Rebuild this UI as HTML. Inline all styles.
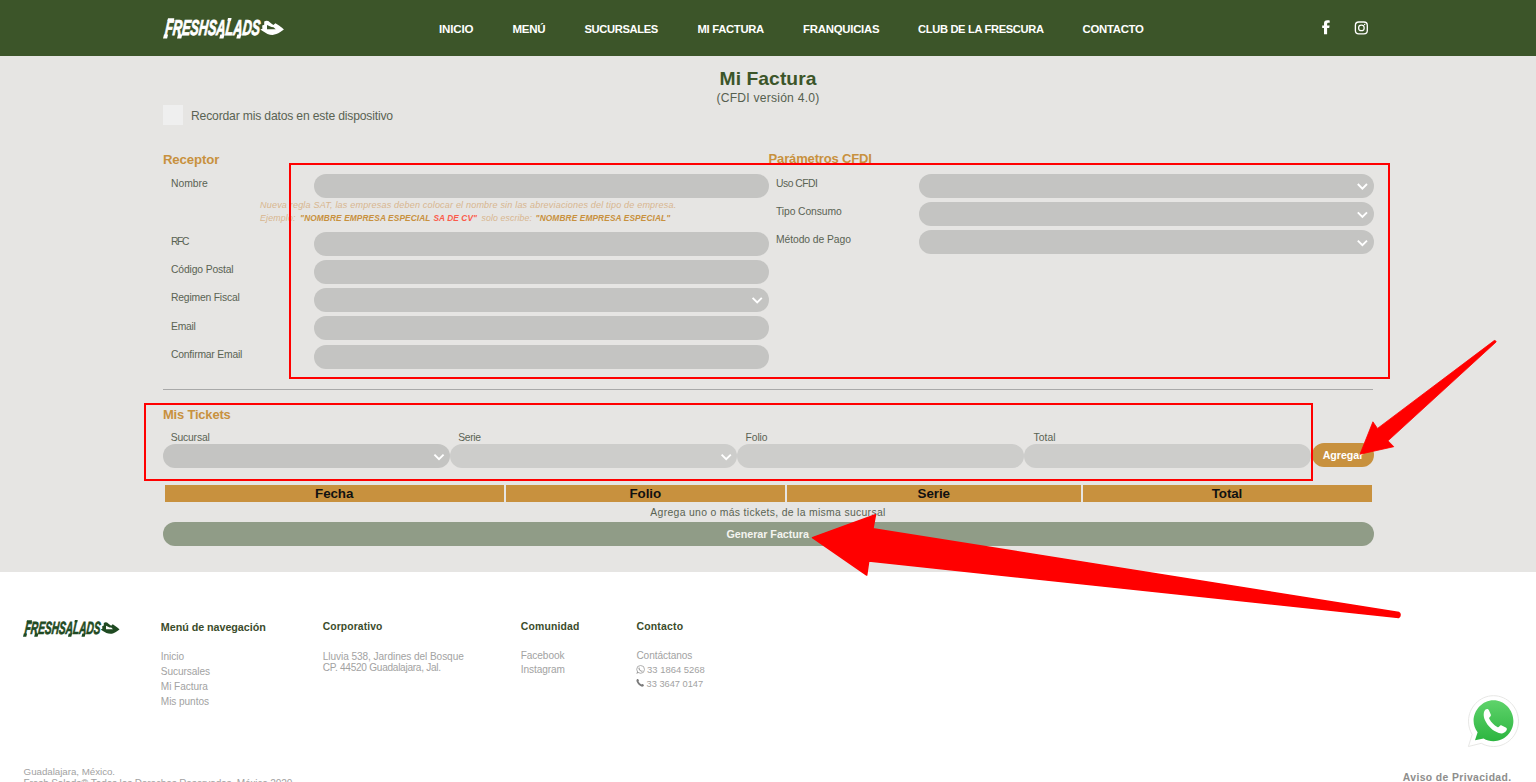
<!DOCTYPE html>
<html><head><meta charset="utf-8"><style>
html,body{margin:0;padding:0;width:1536px;height:782px;overflow:hidden;background:#fff}
body{position:relative;font-family:"Liberation Sans",sans-serif}
.t{position:absolute;white-space:nowrap}
</style></head><body>
<div style="position:absolute;left:0px;top:0px;width:1536px;height:56px;background:#3c5529"></div>
<svg style="position:absolute;left:163px;top:18.2px" width="121" height="21" viewBox="0 0 121 21" preserveAspectRatio="none">
<g fill="#ffffff">
<text x="1.5" y="16.8" font-family="Liberation Sans" font-weight="bold" font-style="italic" font-size="21.5" transform="translate(0,16.8) skewX(-6) translate(0,-16.8)" textLength="95" lengthAdjust="spacingAndGlyphs" stroke="#ffffff" stroke-width="0.85">FRESHSALADS</text>
<path d="M0,20.6 L4.1,20.6 L5.1,16.6 L1,16.6 Z M5,0.3 L11.3,0.3 L10.8,2.8 L4.4,2.8 Z M14,20.6 L18.3,20.6 L19.3,16.6 L15,16.6 Z M56.3,20.6 L60.5,20.6 L61.5,16.6 L57.3,16.6 Z M65,0.1 L68.6,0.1 L68,2.8 L64.4,2.8 Z M73.3,20.6 L77.3,20.6 L78.3,16.6 L74.3,16.6 Z"/>
<path d="M97.3,11.6 L99.4,10.8 L99.2,7.5 L101.2,6.7 L101.2,3.6 L103.2,2.7 L105.3,3.1 L108.3,5.4 L110.4,7.0 L112.4,5.3 L116,7.5 L119,9.8 L120.9,11.6 L117.3,14.1 C114.5,15.8 112,16.9 109.6,16.9 C107.8,16.9 106,16.5 104.5,15.9 L99.6,13.1 Z M104,7.0 L104,11.3 L112.7,11.3 L110.5,9.3 L108.5,9.1 Z" fill-rule="evenodd"/>
</g>
</svg>
<div class="t" style="left:438.90px;top:23.72px;font-size:11.55px;line-height:11.55px;letter-spacing:-0.136px;font-weight:bold;font-style:normal;color:#ffffff;">INICIO</div>
<div class="t" style="left:512.50px;top:23.77px;font-size:11.50px;line-height:11.50px;letter-spacing:-0.253px;font-weight:bold;font-style:normal;color:#ffffff;">MENÚ</div>
<div class="t" style="left:584.40px;top:24.03px;font-size:11.19px;line-height:11.19px;letter-spacing:-0.355px;font-weight:bold;font-style:normal;color:#ffffff;">SUCURSALES</div>
<div class="t" style="left:697.50px;top:23.98px;font-size:11.25px;line-height:11.25px;letter-spacing:-0.292px;font-weight:bold;font-style:normal;color:#ffffff;">MI FACTURA</div>
<div class="t" style="left:803.10px;top:23.88px;font-size:11.36px;line-height:11.36px;letter-spacing:-0.241px;font-weight:bold;font-style:normal;color:#ffffff;">FRANQUICIAS</div>
<div class="t" style="left:918.10px;top:24.08px;font-size:11.13px;line-height:11.13px;letter-spacing:-0.332px;font-weight:bold;font-style:normal;color:#ffffff;">CLUB DE LA FRESCURA</div>
<div class="t" style="left:1082.50px;top:23.87px;font-size:11.37px;line-height:11.37px;letter-spacing:-0.272px;font-weight:bold;font-style:normal;color:#ffffff;">CONTACTO</div>
<svg style="position:absolute;left:0;top:0" width="1536" height="56">
<path fill="#fff" d="M1324,34.3 V28 H1322.2 V25.4 H1324 V23.4 C1324,21.2 1325.2,20.2 1327.3,20.2 C1328.3,20.2 1329.7,20.4 1329.7,20.4 V22.8 H1328.6 C1327.6,22.8 1327.1,23.3 1327.1,24.1 V25.4 H1329.6 L1329.2,28 H1327.1 V34.3 Z"/>
<rect x="1355.4" y="22" width="11.9" height="11.8" rx="3.4" fill="none" stroke="#fff" stroke-width="1.35"/>
<circle cx="1361.4" cy="27.9" r="2.8" fill="none" stroke="#fff" stroke-width="1.25"/>
<circle cx="1364.6" cy="24.6" r="0.75" fill="#fff"/>
</svg>
<div style="position:absolute;left:0px;top:56px;width:1536px;height:516px;background:#e6e5e3"></div>
<div class="t" style="left:719.60px;top:69.07px;font-size:19.28px;line-height:19.28px;letter-spacing:0.056px;font-weight:bold;font-style:normal;color:#3c5529;">Mi Factura</div>
<div class="t" style="left:716.40px;top:91.62px;font-size:12.14px;line-height:12.14px;letter-spacing:0.223px;font-weight:normal;font-style:normal;color:#56604f;">(CFDI versión 4.0)</div>
<div style="position:absolute;left:163px;top:105px;width:20px;height:20px;background:#efefef"></div>
<div class="t" style="left:191.00px;top:109.89px;font-size:12.17px;line-height:12.17px;letter-spacing:-0.180px;font-weight:normal;font-style:normal;color:#5a6353;">Recordar mis datos en este dispositivo</div>
<div class="t" style="left:162.90px;top:152.80px;font-size:13.23px;line-height:13.23px;letter-spacing:-0.104px;font-weight:bold;font-style:normal;color:#c8913e;">Receptor</div>
<div class="t" style="left:768.60px;top:152.16px;font-size:13.04px;line-height:13.04px;letter-spacing:-0.168px;font-weight:bold;font-style:normal;color:#c8913e;">Parámetros CFDI</div>
<div style="position:absolute;left:314px;top:173.5px;width:455px;height:24px;background:#c4c4c2;border-radius:12.0px"></div>
<div class="t" style="left:171.00px;top:178.84px;font-size:10.35px;line-height:10.35px;letter-spacing:0.001px;font-weight:normal;font-style:normal;color:#5a6353;">Nombre</div>
<div style="position:absolute;left:314px;top:231.5px;width:455px;height:24px;background:#c4c4c2;border-radius:12.0px"></div>
<div class="t" style="left:171.00px;top:236.84px;font-size:10.35px;line-height:10.35px;letter-spacing:-1.385px;font-weight:normal;font-style:normal;color:#5a6353;">RFC</div>
<div style="position:absolute;left:314px;top:259.8px;width:455px;height:24px;background:#c4c4c2;border-radius:12.0px"></div>
<div class="t" style="left:171.00px;top:265.14px;font-size:10.35px;line-height:10.35px;letter-spacing:-0.144px;font-weight:normal;font-style:normal;color:#5a6353;">Código Postal</div>
<div style="position:absolute;left:314px;top:288px;width:455px;height:24px;background:#c4c4c2;border-radius:12.0px"></div>
<div class="t" style="left:171.00px;top:293.34px;font-size:10.35px;line-height:10.35px;letter-spacing:-0.193px;font-weight:normal;font-style:normal;color:#5a6353;">Regimen Fiscal</div>
<div style="position:absolute;left:314px;top:316.3px;width:455px;height:24px;background:#c4c4c2;border-radius:12.0px"></div>
<div class="t" style="left:171.00px;top:321.64px;font-size:10.35px;line-height:10.35px;letter-spacing:-0.244px;font-weight:normal;font-style:normal;color:#5a6353;">Email</div>
<div style="position:absolute;left:314px;top:344.6px;width:455px;height:24px;background:#c4c4c2;border-radius:12.0px"></div>
<div class="t" style="left:171.00px;top:349.94px;font-size:10.35px;line-height:10.35px;letter-spacing:-0.201px;font-weight:normal;font-style:normal;color:#5a6353;">Confirmar Email</div>
<div style="position:absolute;left:919px;top:173.5px;width:455px;height:24px;background:#c4c4c2;border-radius:12.0px"></div>
<div class="t" style="left:776.00px;top:178.84px;font-size:10.35px;line-height:10.35px;letter-spacing:-0.491px;font-weight:normal;font-style:normal;color:#5a6353;">Uso CFDI</div>
<div style="position:absolute;left:919px;top:201.8px;width:455px;height:24px;background:#c4c4c2;border-radius:12.0px"></div>
<div class="t" style="left:776.00px;top:207.14px;font-size:10.35px;line-height:10.35px;letter-spacing:-0.110px;font-weight:normal;font-style:normal;color:#5a6353;">Tipo Consumo</div>
<div style="position:absolute;left:919px;top:230px;width:455px;height:24px;background:#c4c4c2;border-radius:12.0px"></div>
<div class="t" style="left:776.00px;top:235.34px;font-size:10.35px;line-height:10.35px;letter-spacing:-0.075px;font-weight:normal;font-style:normal;color:#5a6353;">Método de Pago</div>
<div class="t" style="left:260.00px;top:200.61px;font-size:9.08px;line-height:9.08px;letter-spacing:0.163px;font-weight:normal;font-style:italic;color:#d8b68f;">Nueva regla SAT, las empresas deben colocar el nombre sin las abreviaciones del tipo de empresa.</div>
<div class="t" style="left:260.00px;top:213.92px;font-size:8.84px;line-height:8.84px;letter-spacing:0.161px;font-weight:normal;font-style:italic;color:#d8b68f;">Ejemplo:</div>
<div class="t" style="left:300.10px;top:214.36px;font-size:8.32px;line-height:8.32px;letter-spacing:0.106px;font-weight:bold;font-style:italic;color:#c8913e;">&quot;NOMBRE EMPRESA ESPECIAL</div>
<div class="t" style="left:433.40px;top:214.36px;font-size:8.31px;line-height:8.31px;letter-spacing:0.102px;font-weight:bold;font-style:italic;color:#fb5b4b;">SA DE CV&quot;</div>
<div class="t" style="left:481.50px;top:214.02px;font-size:8.72px;line-height:8.72px;letter-spacing:0.121px;font-weight:normal;font-style:italic;color:#d8b68f;">solo escribe:</div>
<div class="t" style="left:535.60px;top:214.35px;font-size:8.33px;line-height:8.33px;letter-spacing:0.107px;font-weight:bold;font-style:italic;color:#c8913e;">&quot;NOMBRE EMPRESA ESPECIAL&quot;</div>
<div style="position:absolute;left:163px;top:389px;width:1210px;height:1px;background:#a9a9a9"></div>
<div class="t" style="left:162.90px;top:408.41px;font-size:12.98px;line-height:12.98px;letter-spacing:-0.178px;font-weight:bold;font-style:normal;color:#c8913e;">Mis Tickets</div>
<div class="t" style="left:170.70px;top:433.04px;font-size:10.35px;line-height:10.35px;letter-spacing:-0.166px;font-weight:normal;font-style:normal;color:#5a6353;">Sucursal</div>
<div class="t" style="left:458.20px;top:433.04px;font-size:10.35px;line-height:10.35px;letter-spacing:-0.342px;font-weight:normal;font-style:normal;color:#5a6353;">Serie</div>
<div class="t" style="left:745.60px;top:433.04px;font-size:10.35px;line-height:10.35px;letter-spacing:-0.140px;font-weight:normal;font-style:normal;color:#5a6353;">Folio</div>
<div class="t" style="left:1033.60px;top:433.04px;font-size:10.35px;line-height:10.35px;letter-spacing:0.015px;font-weight:normal;font-style:normal;color:#5a6353;">Total</div>
<div style="position:absolute;left:163px;top:444px;width:287px;height:24px;background:#c4c4c2;border-radius:12.0px"></div>
<div style="position:absolute;left:450px;top:444px;width:287px;height:24px;background:#cdcdcb;border-radius:12.0px"></div>
<div style="position:absolute;left:737px;top:444px;width:287px;height:24px;background:#cdcdcb;border-radius:12.0px"></div>
<div style="position:absolute;left:1024px;top:444px;width:287px;height:24px;background:#cdcdcb;border-radius:12.0px"></div>
<div style="position:absolute;left:1312px;top:443px;width:61.5px;height:24px;background:#c8913e;border-radius:12.0px"></div>
<div class="t" style="left:1322.70px;top:450.12px;font-size:10.60px;line-height:10.60px;letter-spacing:0.000px;font-weight:bold;font-style:normal;color:#ffffff;">Agregar</div>
<div style="position:absolute;left:165px;top:485px;width:339px;height:17px;background:#c8913e"></div>
<div class="t" style="left:315.07px;top:486.85px;font-size:13.40px;line-height:13.40px;letter-spacing:-0.100px;font-weight:bold;font-style:normal;color:#111;">Fecha</div>
<div style="position:absolute;left:506px;top:485px;width:279px;height:17px;background:#c8913e"></div>
<div class="t" style="left:629.49px;top:486.85px;font-size:13.40px;line-height:13.40px;letter-spacing:-0.100px;font-weight:bold;font-style:normal;color:#111;">Folio</div>
<div style="position:absolute;left:787px;top:485px;width:294px;height:17px;background:#c8913e"></div>
<div class="t" style="left:917.62px;top:486.85px;font-size:13.40px;line-height:13.40px;letter-spacing:-0.100px;font-weight:bold;font-style:normal;color:#111;">Serie</div>
<div style="position:absolute;left:1082.5px;top:485px;width:289.5px;height:17px;background:#c8913e"></div>
<div class="t" style="left:1211.74px;top:486.85px;font-size:13.40px;line-height:13.40px;letter-spacing:-0.100px;font-weight:bold;font-style:normal;color:#111;">Total</div>
<div class="t" style="left:650.30px;top:508.18px;font-size:10.42px;line-height:10.42px;letter-spacing:0.313px;font-weight:normal;font-style:normal;color:#5a6353;">Agrega uno o más tickets, de la misma sucursal</div>
<div style="position:absolute;left:163px;top:522px;width:1211px;height:24px;background:#909c87;border-radius:12.0px"></div>
<div class="t" style="left:726.50px;top:529.00px;font-size:10.75px;line-height:10.75px;letter-spacing:-0.045px;font-weight:bold;font-style:normal;color:#f4f4f0;">Generar Factura</div>
<svg style="position:absolute;left:0;top:0" width="1536" height="782"><polyline points="1357.8000000000002,184.0 1362.4,188.6 1367.0,184.0" fill="none" stroke="#fff" stroke-width="1.9"/><polyline points="1357.8000000000002,212.29999999999998 1362.4,216.89999999999998 1367.0,212.29999999999998" fill="none" stroke="#fff" stroke-width="1.9"/><polyline points="1357.8000000000002,240.6 1362.4,245.2 1367.0,240.6" fill="none" stroke="#fff" stroke-width="1.9"/><polyline points="752.6,297.8 757.2,302.4 761.8000000000001,297.8" fill="none" stroke="#fff" stroke-width="1.9"/><polyline points="434.4,454.6 439,459.2 443.6,454.6" fill="none" stroke="#fff" stroke-width="1.9"/><polyline points="721.6,454.6 726.2,459.2 730.8000000000001,454.6" fill="none" stroke="#fff" stroke-width="1.9"/></svg>
<div style="position:absolute;left:289px;top:163px;width:1097px;height:212px;border:2px solid #ff0000"></div>
<div style="position:absolute;left:144px;top:403px;width:1165px;height:74px;border:2px solid #ff0000"></div>
<div style="position:absolute;left:0px;top:572px;width:1536px;height:210px;background:#ffffff"></div>
<svg style="position:absolute;left:23.3px;top:620px" width="96.6" height="17.2" viewBox="0 0 121 21" preserveAspectRatio="none">
<g fill="#1f4a22">
<text x="1.5" y="16.8" font-family="Liberation Sans" font-weight="bold" font-style="italic" font-size="21.5" transform="translate(0,16.8) skewX(-6) translate(0,-16.8)" textLength="95" lengthAdjust="spacingAndGlyphs" stroke="#1f4a22" stroke-width="0.85">FRESHSALADS</text>
<path d="M0,20.6 L4.1,20.6 L5.1,16.6 L1,16.6 Z M5,0.3 L11.3,0.3 L10.8,2.8 L4.4,2.8 Z M14,20.6 L18.3,20.6 L19.3,16.6 L15,16.6 Z M56.3,20.6 L60.5,20.6 L61.5,16.6 L57.3,16.6 Z M65,0.1 L68.6,0.1 L68,2.8 L64.4,2.8 Z M73.3,20.6 L77.3,20.6 L78.3,16.6 L74.3,16.6 Z"/>
<path d="M97.3,11.6 L99.4,10.8 L99.2,7.5 L101.2,6.7 L101.2,3.6 L103.2,2.7 L105.3,3.1 L108.3,5.4 L110.4,7.0 L112.4,5.3 L116,7.5 L119,9.8 L120.9,11.6 L117.3,14.1 C114.5,15.8 112,16.9 109.6,16.9 C107.8,16.9 106,16.5 104.5,15.9 L99.6,13.1 Z M104,7.0 L104,11.3 L112.7,11.3 L110.5,9.3 L108.5,9.1 Z" fill-rule="evenodd"/>
</g>
</svg>
<div class="t" style="left:160.80px;top:622.09px;font-size:10.75px;line-height:10.75px;letter-spacing:-0.045px;font-weight:bold;font-style:normal;color:#3b4c2b;">Menú de navegación</div>
<div class="t" style="left:322.80px;top:622.28px;font-size:10.30px;line-height:10.30px;letter-spacing:0.114px;font-weight:bold;font-style:normal;color:#3b4c2b;">Corporativo</div>
<div class="t" style="left:520.70px;top:622.08px;font-size:10.41px;line-height:10.41px;letter-spacing:0.190px;font-weight:bold;font-style:normal;color:#3b4c2b;">Comunidad</div>
<div class="t" style="left:636.40px;top:622.04px;font-size:10.46px;line-height:10.46px;letter-spacing:0.191px;font-weight:bold;font-style:normal;color:#3b4c2b;">Contacto</div>
<div class="t" style="left:322.80px;top:651.55px;font-size:10.09px;line-height:10.09px;letter-spacing:-0.062px;font-weight:normal;font-style:normal;color:#a2a2a2;">Lluvia 538, Jardines del Bosque</div>
<div class="t" style="left:322.80px;top:662.55px;font-size:10.09px;line-height:10.09px;letter-spacing:-0.269px;font-weight:normal;font-style:normal;color:#a2a2a2;">CP. 44520 Guadalajara, Jal.</div>
<div class="t" style="left:160.80px;top:651.75px;font-size:10.09px;line-height:10.09px;letter-spacing:-0.062px;font-weight:normal;font-style:normal;color:#a2a2a2;">Inicio</div>
<div class="t" style="left:160.80px;top:666.95px;font-size:10.09px;line-height:10.09px;letter-spacing:-0.062px;font-weight:normal;font-style:normal;color:#a2a2a2;">Sucursales</div>
<div class="t" style="left:160.80px;top:682.15px;font-size:10.09px;line-height:10.09px;letter-spacing:-0.062px;font-weight:normal;font-style:normal;color:#a2a2a2;">Mi Factura</div>
<div class="t" style="left:160.80px;top:697.35px;font-size:10.09px;line-height:10.09px;letter-spacing:-0.062px;font-weight:normal;font-style:normal;color:#a2a2a2;">Mis puntos</div>
<div class="t" style="left:520.70px;top:651.05px;font-size:10.09px;line-height:10.09px;letter-spacing:-0.062px;font-weight:normal;font-style:normal;color:#a2a2a2;">Facebook</div>
<div class="t" style="left:520.70px;top:664.75px;font-size:10.09px;line-height:10.09px;letter-spacing:-0.062px;font-weight:normal;font-style:normal;color:#a2a2a2;">Instagram</div>
<div class="t" style="left:636.40px;top:651.05px;font-size:10.09px;line-height:10.09px;letter-spacing:-0.062px;font-weight:normal;font-style:normal;color:#a2a2a2;">Contáctanos</div>
<div class="t" style="left:647.10px;top:665.40px;font-size:9.45px;line-height:9.45px;letter-spacing:0.004px;font-weight:normal;font-style:normal;color:#a2a2a2;">33 1864 5268</div>
<div class="t" style="left:646.60px;top:679.55px;font-size:9.28px;line-height:9.28px;letter-spacing:-0.020px;font-weight:normal;font-style:normal;color:#a2a2a2;">33 3647 0147</div>
<svg style="position:absolute;left:0;top:0" width="1536" height="782">
<circle cx="640.6" cy="669.4" r="3.9" fill="none" stroke="#9b9b9b" stroke-width="0.8"/>
<path d="M636.4,673.9 L637.2,671.2 L638.6,672.8 Z" fill="#9b9b9b"/>
<path d="M638.8,667.6 C639.2,667.3 639.5,667.5 639.6,667.9 L639.8,668.5 C639.7,668.8 639.5,668.9 639.6,669.1 C640,669.8 640.6,670.4 641.3,670.7 C641.5,670.6 641.7,670.3 642,670.4 L642.6,670.7 C642.9,670.9 642.8,671.3 642.5,671.5 C642,671.8 641.2,671.7 640.2,671 C639.3,670.3 638.7,669.5 638.5,668.7 C638.4,668.2 638.5,667.8 638.8,667.6 Z" fill="#9b9b9b"/>
<path d="M636.8,679.5 C637.3,678.8 638.2,678.9 638.5,679.6 L638.9,680.6 C639,681 638.7,681.4 638.5,681.6 C639.2,682.9 640.2,683.9 641.5,684.5 C641.7,684.2 642.1,683.9 642.5,684.1 L643.4,684.5 C644,684.9 644.1,685.6 643.4,686.2 C642.4,687 641.2,686.8 639.7,685.6 C638.3,684.4 637.2,683 636.6,681.5 C636.3,680.6 636.4,680 636.8,679.5 Z" fill="#7a7a7a"/>
</svg>
<div class="t" style="left:23.60px;top:766.94px;font-size:9.75px;line-height:9.75px;letter-spacing:-0.034px;font-weight:normal;font-style:normal;color:#a2a2a2;">Guadalajara, México.</div>
<div class="t" style="left:23.60px;top:779.05px;font-size:10.09px;line-height:10.09px;letter-spacing:-0.155px;font-weight:normal;font-style:normal;color:#a2a2a2;">Fresh Salads® Todos los Derechos Reservados. México 2020</div>
<div class="t" style="left:1402.80px;top:773.31px;font-size:10.38px;line-height:10.38px;letter-spacing:0.379px;font-weight:bold;font-style:normal;color:#8e8e8c;">Aviso de Privacidad.</div>
<svg style="position:absolute;left:1466px;top:694px" width="55" height="56" viewBox="0 0 55 56">
<defs><linearGradient id="wg" x1="0" y1="0" x2="0" y2="1"><stop offset="0" stop-color="#5fd36b"/><stop offset="1" stop-color="#2cb540"/></linearGradient></defs>
<path d="M2.4,52.5 L6.2,40.5 C3.8,36.6 2.5,32.1 2.5,27.2 C2.5,13.4 13.7,1.7 27.5,1.7 C41.3,1.7 52.5,13.4 52.5,27.2 C52.5,41 41.3,52.5 27.5,52.5 C23,52.5 18.9,51.3 15.3,49.3 Z" fill="#fff" stroke="#e4e4e2" stroke-width="0.9"/>
<path d="M9,46.3 L11.6,38.2 C9.2,35 7.6,31.2 7.6,27 C7.6,16 16.5,6.2 27.5,6.2 C38.5,6.2 47.4,16 47.4,27 C47.4,38 38.5,47.2 27.5,47.2 C23.8,47.2 20.4,46.2 17.6,44.4 Z" fill="url(#wg)"/>
<path d="M19.5,15.5 C20.8,14.6 22.3,14.9 22.9,16.3 L24.8,20.5 C25.2,21.5 24.7,22.4 23.6,23.3 C23,23.8 23,24.3 23.4,25 C25.3,28.5 28,31.2 31.3,32.9 C32,33.3 32.6,33.2 33,32.7 C33.9,31.6 34.6,30.9 35.7,31.4 L39.8,33.4 C41,34 41.2,35.3 40.4,36.6 C38.8,39 36.3,40.1 32.8,39 C27,37.2 21.6,32 19,26.3 C17.3,22.3 17.2,17.6 19.5,15.5 Z" fill="#fff"/>
</svg>
<svg style="position:absolute;left:0;top:0" width="1536" height="782">
<path fill="#ff0000" stroke="#ff0000" stroke-width="0.8" stroke-linejoin="round" d="M1494.2,340.6 C1495.2,340.1 1496.2,341 1496.1,342 L1388,440.8 L1393.8,446.7 L1360,454.2 L1372.9,421.8 L1377.5,428.4 Z"/>
<path fill="#ff0000" stroke="#ff0000" stroke-width="1.5" stroke-linejoin="round" d="M1399,612.6 C1400.5,613 1400.5,617 1398.6,617.5 L868.75,561 L866.7,575.1 L812.5,537.6 L875.5,514.7 L872.9,528.75 Z"/>
</svg>
</body></html>
